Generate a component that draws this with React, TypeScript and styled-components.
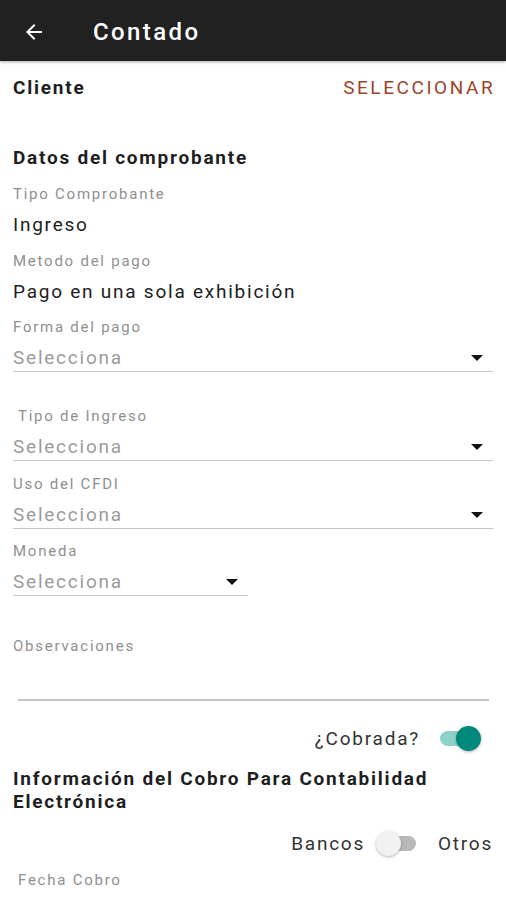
import styled, { createGlobalStyle } from "styled-components";

const GlobalStyle = createGlobalStyle`
  body {
    margin: 0;
    background: #fff;
    font-family: Roboto, "Noto Sans", sans-serif;
  }
`;

const Screen = styled.div`
  width: 506px;
  min-height: 900px;
  background: #fff;
  overflow: hidden;
  letter-spacing: 0.11em;
`;

const AppBar = styled.header`
  display: flex;
  align-items: center;
  height: 61px;
  padding: 2px 0 0 22px;
  box-sizing: border-box;
  background: #212121;
  box-shadow: 0 1px 3px rgba(0, 0, 0, 0.35);
  color: #fff;
`;

const Title = styled.h1`
  margin: 0 0 0 47px;
  font-size: 24px;
  font-weight: 500;
  letter-spacing: 0.1em;
  color: #fff;
`;

const Content = styled.main`
  padding: 0 13px;
`;

const ClientRow = styled.div`
  display: flex;
  align-items: center;
  justify-content: space-between;
  height: 52px;
`;

const Heading = styled.h2<{ top?: number }>`
  margin: ${(p) => p.top ?? 0}px 0 0;
  font-size: 19px;
  line-height: 23px;
  font-weight: 700;
  color: #1e1e1e;
`;

const TextButton = styled.span`
  margin-right: -0.12em;
  font-size: 19px;
  letter-spacing: 0.135em;
  color: #a0432a;
`;

const Label = styled.div<{ top: number; indent?: boolean }>`
  margin-top: ${(p) => p.top}px;
  padding-left: ${(p) => (p.indent ? 5 : 0)}px;
  font-size: 15px;
  line-height: 20px;
  color: #8f8f8f;
`;

const Value = styled.div`
  margin-top: 11px;
  font-size: 19px;
  line-height: 20px;
  color: #212121;
`;

const Select = styled.div<{ width?: number }>`
  display: flex;
  align-items: center;
  justify-content: space-between;
  width: ${(p) => (p.width ? `${p.width}px` : "100%")};
  margin-top: 11px;
  padding: 0 10px 3px 0;
  box-sizing: border-box;
  border-bottom: 1.5px solid #c4c4c4;
  font-size: 19px;
  line-height: 20px;
  color: #9b9b9b;
`;

const Caret = styled.span`
  width: 0;
  height: 0;
  border-left: 6px solid transparent;
  border-right: 6px solid transparent;
  border-top: 6px solid #111;
`;

const NotesInput = styled.div`
  height: 43px;
  margin: 0 4px 0 5px;
  border-bottom: 2px solid #c4c4c4;
`;

const SwitchRow = styled.div<{ top: number; end?: number }>`
  display: flex;
  align-items: center;
  justify-content: flex-end;
  height: 40px;
  margin-top: ${(p) => p.top}px;
  padding-right: ${(p) => p.end ?? 0}px;
  font-size: 19px;
  color: #333;
`;

const Track = styled.span<{ on: boolean }>`
  position: relative;
  display: inline-block;
  width: 36px;
  height: 15px;
  margin: ${(p) => (p.on ? "0 0 0 20px" : "0 22px 0 15px")};
  border-radius: 8px;
  background: ${(p) => (p.on ? "#8fd1c8" : "#b9b9b9")};
`;

const Thumb = styled.span<{ on: boolean }>`
  position: absolute;
  top: -5px;
  left: ${(p) => (p.on ? "16px" : "-4px")};
  width: 25px;
  height: 25px;
  border-radius: 50%;
  background: ${(p) => (p.on ? "#00897b" : "#f1f1f1")};
  box-shadow: 0 1px 3px rgba(0, 0, 0, 0.3);
`;

const Toggle = ({ on }: { on: boolean }) => (
  <Track on={on}>
    <Thumb on={on} />
  </Track>
);

const BackArrow = () => (
  <svg width="24" height="24" viewBox="0 0 24 24" fill="#fff">
    <path d="M20 11H7.83l5.59-5.59L12 4l-8 8 8 8 1.41-1.41L7.83 13H20v-2z" />
  </svg>
);

const SelectField = ({
  label,
  top,
  indent,
  width,
}: {
  label: string;
  top: number;
  indent?: boolean;
  width?: number;
}) => (
  <>
    <Label top={top} indent={indent}>
      {label}
    </Label>
    <Select width={width}>
      Selecciona
      <Caret />
    </Select>
  </>
);

export default function App() {
  return (
    <Screen>
      <GlobalStyle />
      <AppBar>
        <BackArrow />
        <Title>Contado</Title>
      </AppBar>
      <Content>
        <ClientRow>
          <Heading>Cliente</Heading>
          <TextButton>SELECCIONAR</TextButton>
        </ClientRow>
        <Heading top={33}>Datos del comprobante</Heading>
        <Label top={15}>Tipo Comprobante</Label>
        <Value>Ingreso</Value>
        <Label top={16}>Metodo del pago</Label>
        <Value>Pago en una sola exhibición</Value>
        <SelectField label="Forma del pago" top={15} />
        <SelectField label="Tipo de Ingreso" top={34} indent />
        <SelectField label="Uso del CFDI" top={13} />
        <SelectField label="Moneda" top={12} width={235} />
        <Label top={40}>Observaciones</Label>
        <NotesInput />
        <SwitchRow top={17} end={17}>
          ¿Cobrada?
          <Toggle on />
        </SwitchRow>
        <Heading top={9}>
          Información del Cobro Para Contabilidad Electrónica
        </Heading>
        <SwitchRow top={10}>
          Bancos
          <Toggle on={false} />
          Otros
        </SwitchRow>
        <Label top={7} indent>
          Fecha Cobro
        </Label>
      </Content>
    </Screen>
  );
}
